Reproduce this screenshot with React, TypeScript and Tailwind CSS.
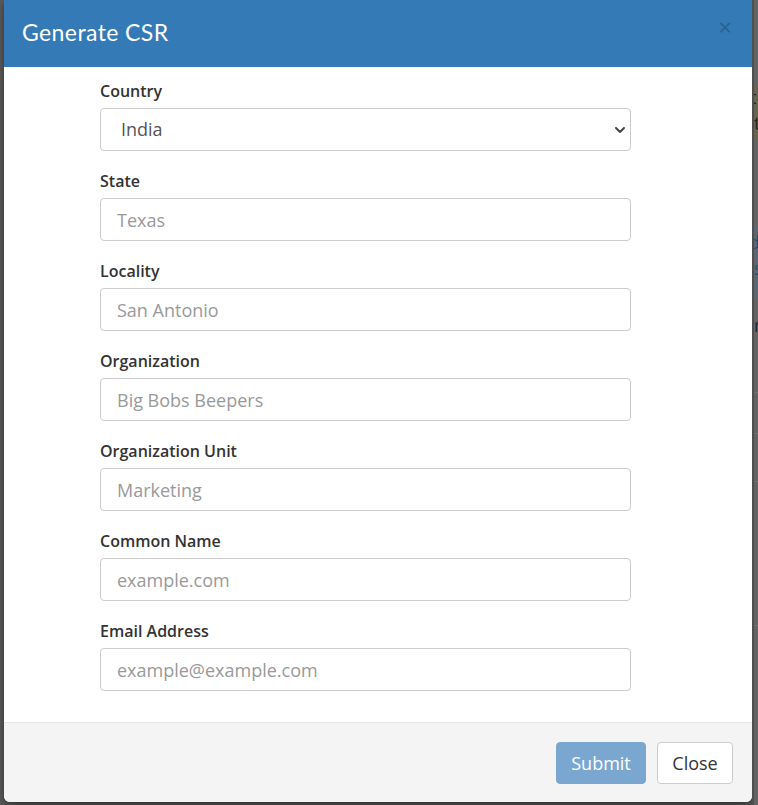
import { ChevronDown } from "lucide-react";

const fields = [
  { label: "State", placeholder: "Texas" },
  { label: "Locality", placeholder: "San Antonio" },
  { label: "Organization", placeholder: "Big Bobs Beepers" },
  { label: "Organization Unit", placeholder: "Marketing" },
  { label: "Common Name", placeholder: "example.com" },
  { label: "Email Address", placeholder: "example@example.com", type: "email" },
];

function Field({ label, children }: { label: string; children: React.ReactNode }) {
  return (
    <div className="mb-[19px]">
      <label className="block mb-[6px] text-[16px] leading-[22px] font-semibold text-[#333]">
        {label}
      </label>
      {children}
    </div>
  );
}

// strip of page content visible to the right of the modal
function PageEdge() {
  return (
    <div className="flex flex-col w-[6px] h-[805px] bg-[#636363] border-l-2 border-[#4f4f4f]">
      <div className="h-[84px]" />
      <div className="h-[56px] bg-[#67644f] text-[#2b2418] text-[18px] leading-[26px] overflow-hidden -indent-[4px]">
        t<br />t
      </div>
      <div className="h-[85px]" />
      <div className="h-[75px] bg-[#5a6670] text-[#2a4e6e] text-[18px] leading-[26px] overflow-hidden -indent-[5px] pt-[4px]">
        d<br />s
      </div>
      <div className="h-[80px] text-[#1f2a36] text-[18px] leading-[22px] overflow-hidden -indent-[5px] pt-[4px]">
        <div className="h-[10px]" />r
      </div>
      <div className="h-[12px]" />
      <div className="h-[41px] border-t border-[#707070]" />
      <div className="h-[48px] border-t border-[#707070]" />
      <div className="h-[144px] border-t border-[#707070]" />
      <div className="h-[140px] border-t border-[#707070]" />
    </div>
  );
}

export default function App() {
  return (
    <div
      className="flex w-[758px] h-[805px] bg-[#5c5c5c] overflow-hidden"
      style={{ fontFamily: '"Open Sans", "Liberation Sans", sans-serif' }}
    >
      <div className="ml-[4px] w-[748px] h-[802px] flex flex-col bg-white rounded-b-[6px] overflow-hidden shadow-[0_3px_9px_rgba(0,0,0,0.5)]">
        <div className="h-[67px] shrink-0 bg-[#337ab7] flex items-center justify-between pl-[18px] pr-[20px]">
          <h4
            className="text-white text-[23px] leading-none pb-[3px] tracking-[0.4px]"
            style={{ fontFamily: 'Lato, "Open Sans", sans-serif' }}
          >
            Generate CSR
          </h4>
          <button className="text-[#2a6194] text-[24px] leading-none -mt-[14px] font-normal">
            ×
          </button>
        </div>

        <div className="flex-1 pt-[13px] px-[96px]">
          <Field label="Country">
            <div className="relative w-[531px]">
              <select
                defaultValue="India"
                className="appearance-none w-full h-[43px] rounded-[4px] border border-[#ccc] bg-white pl-[20px] pr-8 text-[18px] text-[#555] outline-none"
              >
                <option>India</option>
                <option>United States</option>
              </select>
              <ChevronDown
                className="absolute right-[3px] top-[14px] text-[#444]"
                size={16}
                strokeWidth={3}
              />
            </div>
          </Field>
          {fields.map((f) => (
            <Field key={f.label} label={f.label}>
              <input
                type={f.type ?? "text"}
                placeholder={f.placeholder}
                className="block w-[531px] h-[43px] rounded-[4px] border border-[#ccc] bg-white px-[16px] text-[18px] text-[#555] placeholder:text-[#999] outline-none"
              />
            </Field>
          ))}
        </div>

        <div className="h-[80px] shrink-0 border-t border-[#e5e5e5] bg-[#f4f4f4] flex justify-end items-start pt-[19px] pr-[19px] gap-[11px]">
          <button className="h-[42px] w-[90px] rounded-[4px] bg-[#7aa7d0] border border-[#7aa7d0] text-white text-[18px]">
            Submit
          </button>
          <button className="h-[42px] w-[76px] rounded-[4px] bg-white border border-[#ccc] text-[#333] text-[18px]">
            Close
          </button>
        </div>
      </div>
      <PageEdge />
    </div>
  );
}
